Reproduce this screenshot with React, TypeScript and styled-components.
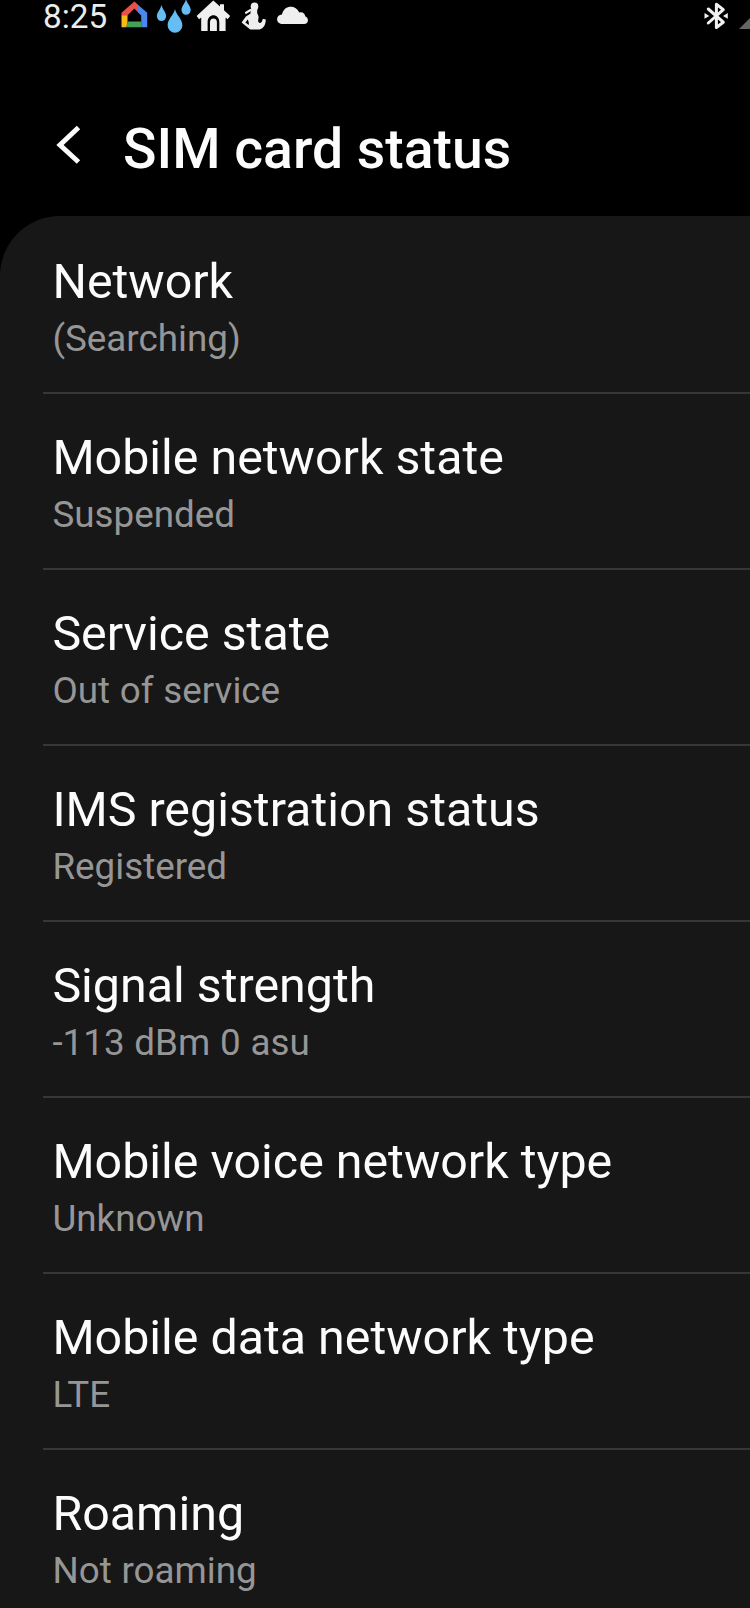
import React from 'react';
import styled, { createGlobalStyle } from 'styled-components';

const GlobalStyle = createGlobalStyle`
  * { box-sizing: border-box; }
  body { margin: 0; background: #000; font-family: Roboto, sans-serif; overflow: hidden; }
`;
const Screen = styled.div`
  width: 750px; height: 1608px; background: #000; color: #fcfcfc;
  overflow: hidden; display: flex; flex-direction: column;
`;
const StatusBar = styled.div`
  height: 36px; flex: none; display: flex; align-items: flex-start; justify-content: space-between; padding-left: 43px;
`;
const StatusGroup = styled.div`display: flex; align-items: flex-start;`;
const Clock = styled.span`width: 77px; font-size: 33.3px; line-height: 33px; color: #ececec;`;
const Icon = styled.svg<{ $gap?: number }>`
  display: block; flex: none; height: 36px; margin-right: ${p => p.$gap ?? 0}px;
`;
const Header = styled.header`
  height: 180px; flex: none; display: flex; align-items: flex-start; padding: 82px 0 0 56px; gap: 41px;
`;
const BackIcon = styled.svg`display: block; margin-top: 7px;`;
const Title = styled.h1`margin: 0; font-size: 55.3px; font-weight: 500; line-height: 64px; white-space: nowrap;`;
const Panel = styled.main`
  flex: 1; background: #171717; border-top-left-radius: 60px; overflow: hidden; padding-top: 1.5px;
`;
const Row = styled.section`
  height: 176px; margin-left: 43px; padding: 35.5px 0 0 9.4px; border-bottom: 2px solid #373737;
`;
const Name = styled.div`font-size: 48.35px; line-height: 58px; white-space: nowrap;`;
const Value = styled.div`
  font-size: 36.8px; line-height: 56px; word-spacing: .6px; color: #969696; white-space: nowrap;
`;

const rows = [
  ['Network', '(Searching)'],
  ['Mobile network state', 'Suspended'],
  ['Service state', 'Out of service'],
  ['IMS registration status', 'Registered'],
  ['Signal strength', '-113 dBm 0 asu'],
  ['Mobile voice network type', 'Unknown'],
  ['Mobile data network type', 'LTE'],
  ['Roaming', 'Not roaming'],
];

const HomeLogo = () => (
  <Icon $gap={6} width="29" viewBox="0 0 29 36">
    <path d="M1.500 12.800 14.400 1.500l4.200 3.700v7.600l-4.200-4.200-7 6.900H1.500z" fill="#ea5045" />
    <path d="M18.200 4.900 27.200 12.800V27.200h-6V15.600l-3.300-3.300z" fill="#4b87ed" />
    <path d="M1.500 15.300h6v6.200l-1 5.700h-5z" fill="#f6bb18" />
    <path d="M7.500 21.500h13.700v5.700H6.500z" fill="#43a256" />
  </Icon>
);
const Drops = () => (
  <Icon $gap={3} width="38" viewBox="0 0 38 36" fill="#65bdf4">
    <path d="M6.500 5C5.600 9.500 1.900 12.200 1.900 16.300a4.600 4.800 0 0 0 9.200 0c0-4.100-3.700-6.800-4.600-11.300z" />
    <path d="M20 9c-1.200 6.200-7.400 10-7.400 16.300a7.400 7.500 0 0 0 14.800 0c0-6.300-6.200-10.100-7.400-16.300z" />
    <path d="M31 -1c-.9 4.500-4.500 7-4.500 11a4.600 4.800 0 0 0 9.200 0c0-4-3.700-6.500-4.700-11z" />
  </Icon>
);
const House = () => (
  <Icon $gap={10} width="35" viewBox="0 0 35 36" fill="#efefef">
    <path d="M17.300.6 24 6.500V4.300h4v6l6.200 5.700-2.600 3.200-2-1.600V31h-6.300v-9c0-9-11.700-9-11.700 0v9H5.200V17.600l-2.100 1.700L.6 16z" />
    <path d="M14 31v-9c0-4.600 6.900-4.600 6.900 0v9z" />
  </Icon>
);
const Person = () => (
  <Icon $gap={9} width="26" viewBox="0 0 26 36" fill="#efefef">
    <ellipse cx="13.500" cy="6.500" rx="3.800" ry="4" />
    <path d="m3.800 12.200 5.700-3.400 1.400 1.700-6.200 3.700z" />
    <path d="M10.300 8.500h5.900v4.200c0 1.300 1.400 2.300 1.400 4.300 0 2.300-1 3.500-.1 5.100 1 1.500 2.900 1 3.400-.5l1-2.800 2.900.7c-.2 6.200-3 10-7.800 10.100H9.200L.6 22.500l4.300-6.100 4.400-2.700zM6.700 19.400l-2.300 3 3.300 2.700c.4-1.900.1-3.800-1-5.700z" fillRule="evenodd" />
  </Icon>
);
const Cloud = () => (
  <Icon width="33" viewBox="0 0 33 36" fill="#efefef">
    <path d="M6.500 24C-.8 23.700-.5 14.700 6 14.400 8 4.700 20 4.600 23.200 12.400c3.400-1 5.800 1.100 6 3.900C33.500 18 32.500 24 28 24z" />
  </Icon>
);
const Bluetooth = () => (
  <Icon $gap={10} width="26" viewBox="0 0 26 36">
    <path d="m5.300 9 15 13.200-6.900 5.300V4.300l6.900 5.300L5.300 23" fill="none" stroke="#f1f1f1" strokeWidth="3" strokeLinejoin="round" strokeLinecap="round" />
    <path d="m1.500 13 4.800 2.900-4.800 2.900zM24.800 13 20 15.900l4.800 2.900z" fill="#f1f1f1" />
  </Icon>
);
const Signal = () => (
  <Icon width="11" viewBox="0 0 11 36"><path d="M0 29 11 18v11z" fill="#656565" /></Icon>
);

export default function App() {
  return (
    <Screen>
      <GlobalStyle />
      <StatusBar>
        <StatusGroup>
          <Clock>8:25</Clock>
          <HomeLogo />
          <Drops />
          <House />
          <Person />
          <Cloud />
        </StatusGroup>
        <StatusGroup>
          <Bluetooth />
          <Signal />
        </StatusGroup>
      </StatusBar>
      <Header>
        <BackIcon width="26" height="40" viewBox="0 0 26 40" fill="none" stroke="#fafafa" strokeWidth="5">
          <path d="M22.500 2.500 4 20l18.500 17" />
        </BackIcon>
        <Title>SIM card status</Title>
      </Header>
      <Panel>
        {rows.map(([name, value]) => (
          <Row key={name}><Name>{name}</Name><Value>{value}</Value></Row>
        ))}
      </Panel>
    </Screen>
  );
}
